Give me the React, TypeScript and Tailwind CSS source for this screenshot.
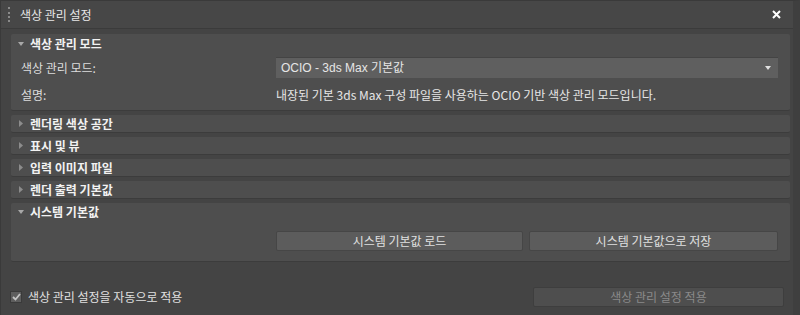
import React from "react";

const font = { fontFamily: '"Noto Sans CJK KR", "Noto Sans", sans-serif' };

function TriDown({ className = "" }: { className?: string }) {
  return (
    <svg width="6" height="4" viewBox="0 0 6 4" className={className}>
      <path d="M0 0 H6 L3 4 Z" fill="currentColor" />
    </svg>
  );
}
function TriRight() {
  return (
    <svg width="4" height="7" viewBox="0 0 4 7" className="text-[#8c8c8c]">
      <path d="M0 0 L4 3.5 L0 7 Z" fill="currentColor" />
    </svg>
  );
}

function Collapsed({ title }: { title: string }) {
  return (
    <div className="h-[18px] rounded-[2px] bg-[#4e4e4e] border-b border-[#3c3c3c] flex items-center pl-[8px]">
      <TriRight />
      <span className="ml-[7px] text-[12px] font-bold text-[#f2f2f2] leading-none">{title}</span>
    </div>
  );
}

export default function App() {
  return (
    <div
      style={font}
      className="w-[800px] h-[315px] bg-[#444444] flex flex-col border-t border-l border-[#3a3a3a] border-r-[7px] border-r-[#3f3f3f] overflow-hidden select-none"
    >
      {/* title bar */}
      <div className="h-[28px] shrink-0 flex items-center bg-[#474747] border-b border-[#3b3b3b] pl-[7px] pr-[12px]">
        <div className="w-[2px] h-[15px] border-l-2 border-dotted border-[#8a8a8a]" />
        <span className="ml-[10px] text-[12px] text-[#e8e8e8]">색상 관리 설정</span>
        <div className="ml-auto text-white">
          <svg width="9" height="9" viewBox="0 0 9 9">
            <path d="M1 1 L8 8 M8 1 L1 8" stroke="currentColor" strokeWidth="2" />
          </svg>
        </div>
      </div>

      {/* panels */}
      <div className="flex flex-col gap-[4px] pl-[10px] pr-[3px] pt-[5px]">
        {/* panel 1 */}
        <div className="rounded-[2px] bg-[#4e4e4e] border-b border-[#3c3c3c] pb-[7px]">
          <div className="h-[20px] flex items-center pl-[7px]">
            <TriDown className="text-[#a8a8a8]" />
            <span className="ml-[6px] text-[12px] font-bold text-[#f2f2f2] leading-none">색상 관리 모드</span>
          </div>
          <div className="flex items-center h-[21px] mt-[3px]">
            <span className="w-[265px] pl-[10px] text-[12px] text-[#dddddd]">색상 관리 모드:</span>
            <div className="w-[502px] h-[21px] bg-[#5f5f5f] border-t border-[#444] flex items-center pl-[5px] pr-[7px]">
              <span className="text-[12px] text-[#e6e6e6]" style={{ fontFamily: '"Liberation Sans", "Noto Sans CJK KR", sans-serif' }}>
                OCIO - 3ds Max 기본값
              </span>
              <TriDown className="ml-auto text-[#e0e0e0]" />
            </div>
          </div>
          <div className="flex items-center h-[16px] mt-[9px]">
            <span className="w-[265px] pl-[10px] text-[12px] text-[#dddddd]">설명:</span>
            <span className="text-[12px] text-[#e6e6e6]">
              내장된 기본 3ds Max 구성 파일을 사용하는 OCIO 기반 색상 관리 모드입니다.
            </span>
          </div>
        </div>

        <Collapsed title="렌더링 색상 공간" />
        <Collapsed title="표시 및 뷰" />
        <Collapsed title="입력 이미지 파일" />
        <Collapsed title="렌더 출력 기본값" />

        {/* panel 6 */}
        <div className="rounded-[2px] bg-[#4e4e4e] border-b border-[#3c3c3c] pb-[10px]">
          <div className="h-[18px] flex items-center pl-[7px]">
            <TriDown className="text-[#a8a8a8]" />
            <span className="ml-[6px] text-[12px] font-bold text-[#f2f2f2] leading-none">시스템 기본값</span>
          </div>
          <div className="grid grid-cols-[247px_249px] gap-[6px] ml-[265px] mt-[10px]">
            <div className="h-[20px] rounded-[2px] bg-[#5c5c5c] border border-[#464646] flex items-center justify-center text-[12px] text-[#e0e0e0]">
              시스템 기본값 로드
            </div>
            <div className="h-[20px] rounded-[2px] bg-[#5c5c5c] border border-[#464646] flex items-center justify-center text-[12px] text-[#e0e0e0]">
              시스템 기본값으로 저장
            </div>
          </div>
        </div>
      </div>

      {/* bottom */}
      <div className="mt-auto mb-[8px] flex items-center pl-[9px] pr-[9px]">
        <div className="w-[12px] h-[12px] bg-[#5e5e5e] border border-[#3a3a3a] flex items-center justify-center">
          <svg width="9" height="8" viewBox="0 0 9 8">
            <path d="M1 4 L3.5 6.5 L8 1" stroke="#c4c4c4" strokeWidth="1.8" fill="none" />
          </svg>
        </div>
        <span className="ml-[6px] text-[12px] text-[#e0e0e0]">색상 관리 설정을 자동으로 적용</span>
        <div className="ml-auto w-[251px] h-[20px] rounded-[2px] bg-[#4e4e4e] border border-[#3e3e3e] flex items-center justify-center text-[12px] text-[#8a8a8a]">
          색상 관리 설정 적용
        </div>
      </div>
    </div>
  );
}
